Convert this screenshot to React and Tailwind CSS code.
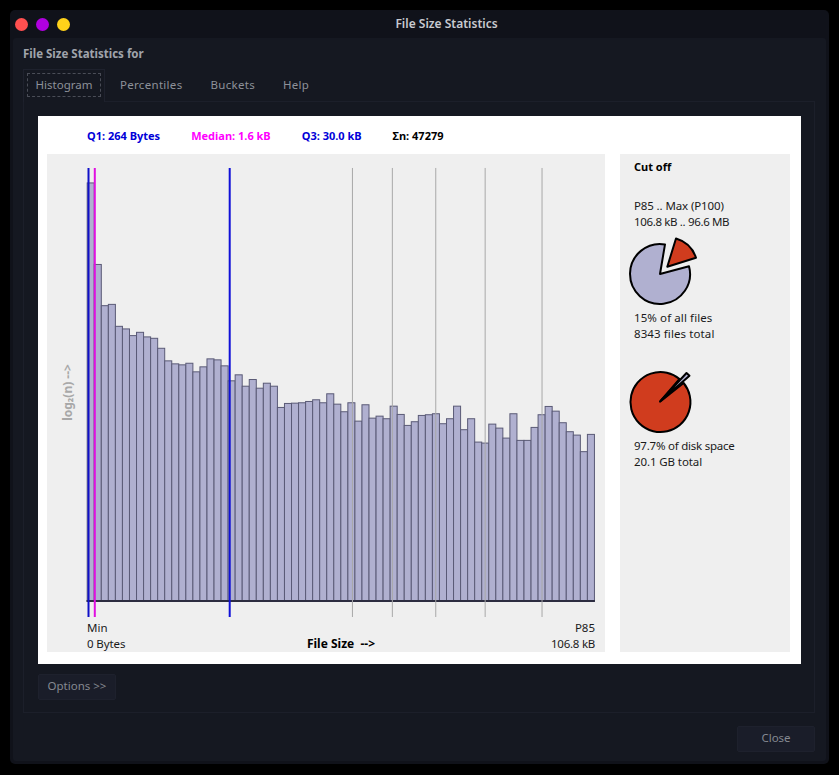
import React from "react";

// oberkante jedes balkens, in seitenpixeln
const BAR_TOPS = [
  183,264.7,306,304.7,326.7,329.3,336,332.7,337.3,338.7,348.7,361.3,364.3,365.3,363.7,372.3,367.3,359.3,360.3,366.3,
  381.3,375.3,386.7,380,388.7,383.7,386.7,408,404,403.7,403.3,402,400.3,403.3,394.3,404.7,412.3,403.3,421.7,405.3,
  418.7,416.7,419.3,406.7,415,426,422.3,416,415.3,414.3,424.3,419.3,406.7,430.3,419.3,442.7,443.7,424.7,428.7,438.7,
  414.3,441,441,428,415.3,407,411.7,423.3,432.3,435.7,452.3,435
];
const BAR_X0 = 86.7;
const BAR_W = 7.06;
const BASE_Y = 602;
const GREY_LINES = [352.5, 392.5, 436, 485.5, 542.5];

function Histogram() {
  return (
    <svg width="558" height="466" viewBox="47 154 558 466" className="block">
      {BAR_TOPS.map((top, i) => (
        <rect key={i} x={BAR_X0 + i * BAR_W} y={top} width={BAR_W} height={BASE_Y - top} fill="#b0b0d0" stroke="#5a5a76" strokeWidth="1" />
      ))}
      <line x1="86" x2="595.5" y1={BASE_Y} y2={BASE_Y} stroke="#2c2c40" strokeWidth="2" />
      {GREY_LINES.map((x) => (
        <line key={x} x1={x} x2={x} y1="168" y2="618" stroke="#a8a8a8" strokeWidth="1" />
      ))}
      <line x1="88" x2="88" y1="168" y2="618" stroke="#1010c8" strokeWidth="2" />
      <line x1="94.3" x2="94.3" y1="168" y2="618" stroke="#e010e0" strokeWidth="2" />
      <line x1="229.5" x2="229.5" y1="168" y2="618" stroke="#1010d8" strokeWidth="2" />
      <text x="0" y="0" transform="translate(71 393) rotate(-90)" textAnchor="middle" fontSize="12" fontWeight="700" fill="#a8a8a8" fontFamily="'Noto Sans', sans-serif">log₂(n) --&gt;</text>
    </svg>
  );
}

function FilesPie() {
  return (
    <svg width="100" height="78" viewBox="620 232 100 78" className="block -ml-[14px]">
      <path d="M660 274 L689 266.2 A30 30 0 1 1 665 244.4 Z" fill="#b0b0d0" stroke="#000" strokeWidth="2" strokeLinejoin="round" />
      <path d="M667.3 266.7 L676 238.5 A30 30 0 0 1 696 257.7 Z" fill="#d03c1e" stroke="#000" strokeWidth="2" strokeLinejoin="round" />
    </svg>
  );
}

function DiskPie() {
  return (
    <svg width="100" height="96" viewBox="620 342 100 96" className="block -ml-[14px]">
      <path d="M660 401.7 L679.5 378.9 A30 30 0 1 0 683.6 383 Z" fill="#d03c1e" stroke="#000" strokeWidth="2" strokeLinejoin="round" />
      <path d="M660.5 401 L686.5 373 L689.5 375.7 Z" fill="#b0b0d0" stroke="#000" strokeWidth="2" strokeLinejoin="round" />
    </svg>
  );
}

function Button({ children }) {
  return (
    <button className="w-[78px] h-[26px] pb-[2px] bg-[#1a1d29] border border-[#1e212d] rounded-[2px] text-[11.5px] text-[#858991]">
      {children}
    </button>
  );
}

export default function App() {
  return (
    <div className="w-[839px] h-[775px] bg-black p-[10px] font-['Noto_Sans',sans-serif] overflow-hidden">
      <div className="w-[819px] h-[754px] bg-[#10121a] rounded-[5px] flex flex-col">
        <div className="h-[28px] flex items-center shrink-0">
          <div className="flex items-center gap-[8px] pl-[5px]">
            <span className="w-[13px] h-[13px] rounded-full bg-[#ff5050]" />
            <span className="w-[13px] h-[13px] rounded-full bg-[#b000e0]" />
            <span className="w-[13px] h-[13px] rounded-full bg-[#ffd21a]" />
          </div>
          <div className="flex-1 text-center text-[12px] font-semibold text-[#c8cad0] pr-[6px]">File Size Statistics</div>
        </div>

        <div className="mx-[3px] mb-[3px] flex-1 bg-[#151821] rounded-[3px] pl-[10px] pr-[11px] pt-[9px] flex flex-col">
          <div className="h-[14px] leading-[14px] text-[11.5px] font-bold text-[#a0a4ac]">File Size Statistics for</div>

          <div className="mt-[8px] h-[32px] flex text-[11.5px] text-[#8d9199] tracking-[0.3px] relative z-10">
            <div className="w-[82px] h-[33px] border border-b-0 border-[#1e212d] bg-[#151821] p-[3px]">
              <div className="h-[24px] border border-dashed border-[#4a4d57] flex items-center justify-center tracking-[0px]">Histogram</div>
            </div>
            <div className="flex items-center gap-[28px] pl-[15px] h-[32px]">
              <span>Percentiles</span>
              <span>Buckets</span>
              <span>Help</span>
            </div>
          </div>

          <div className="h-[612px] border border-[#1c1f2a] pl-[14px] pr-[13px] pt-[14px]">
            <div className="h-[548px] bg-white pl-[9px] pr-[11px] flex flex-col">
              <div className="h-[38px] pt-[13px] pl-[40px] flex gap-[31px] text-[11px] leading-[14px] font-bold">
                <span className="text-[#0000d8]">Q1: 264 Bytes</span>
                <span className="text-[#ff00ff]">Median: 1.6 kB</span>
                <span className="text-[#0000d8]">Q3: 30.0 kB</span>
                <span className="text-black">Σn: 47279</span>
              </div>
              <div className="flex gap-[15px] text-[11.5px] leading-[16px] text-[#1a1a1a]">
                <div className="w-[558px] h-[498px] bg-[#efefef] flex flex-col">
                  <Histogram />
                  <div className="flex-1 grid grid-cols-[1fr_auto_1fr] pl-[40px] pr-[10px] pt-[1px]">
                    <div>
                      <div>Min</div>
                      <div className="tracking-[-0.1px]">0 Bytes</div>
                    </div>
                    <div className="self-end font-bold text-[12px] text-black">File Size&nbsp; --&gt;</div>
                    <div className="text-right">
                      <div>P85</div>
                      <div className="tracking-[-0.25px]">106.8 kB</div>
                    </div>
                  </div>
                </div>
                <div className="w-[170px] h-[498px] bg-[#efefef] px-[14px] pt-[5px]">
                  <div className="font-bold text-[11px] text-black">Cut off</div>
                  <div className="mt-[23px]">
                    <div className="tracking-[-0.12px]">P85 .. Max (P100)</div>
                    <div className="tracking-[-0.35px]">106.8 kB .. 96.6 MB</div>
                  </div>
                  <div className="mt-[2px]"><FilesPie /></div>
                  <div>
                    <div className="tracking-[0.1px]">15% of all files</div>
                    <div className="tracking-[0.1px]">8343 files total</div>
                  </div>
                  <DiskPie />
                  <div>
                    <div className="tracking-[-0.23px]">97.7% of disk space</div>
                    <div className="tracking-[-0.1px]">20.1 GB total</div>
                  </div>
                </div>
              </div>
            </div>
            <div className="mt-[8px]"><Button>Options &gt;&gt;</Button></div>
          </div>

          <div className="mt-[13px] flex justify-end"><Button>Close</Button></div>
        </div>
      </div>
    </div>
  );
}
